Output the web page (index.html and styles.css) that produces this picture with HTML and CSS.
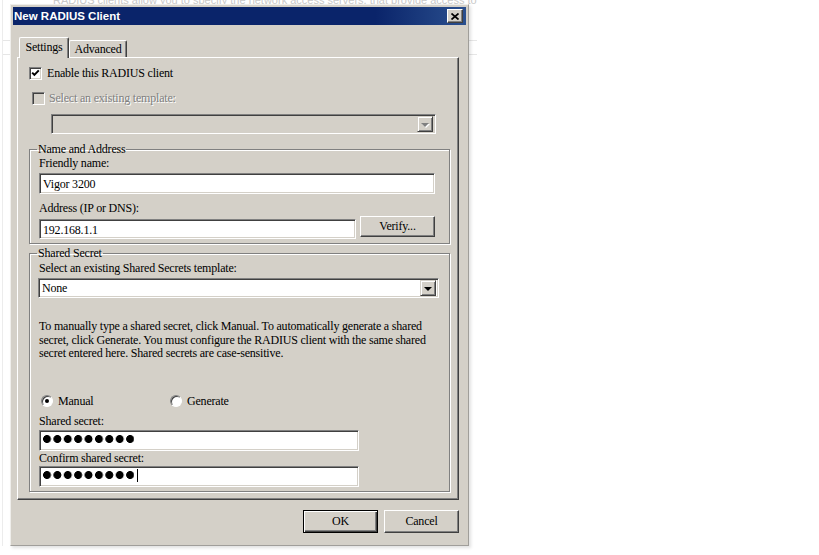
FILE: index.html
```html
<!DOCTYPE html>
<html lang="en">
   <head>
      <meta charset="UTF-8" />
      <title>New RADIUS Client</title>
      <link rel="stylesheet" href="styles.css">
   </head>
   <body>
      <!-- janela de fundo (console NPS) -->
      <div class="behind">
         <div class="behind-text">RADIUS clients allow you to specify the network access servers, that provide access to</div>
      </div>

      <div class="window">
         <div class="titlebar">
            <span class="title">New RADIUS Client</span>
            <span class="close-btn">
               <svg width="8" height="7" viewBox="0 0 8 7"><path d="M0.5 0.5 L7.5 6.5 M7.5 0.5 L0.5 6.5" stroke="#000" stroke-width="1.7" fill="none"/></svg>
            </span>
         </div>

         <div class="body">
            <div class="tabs">
               <div class="tab active">Settings</div>
               <div class="tab tab-adv">Advanced</div>
            </div>

            <div class="panel">
               <div class="row check-row">
                  <span class="checkbox">
                     <svg width="9" height="9" viewBox="0 0 9 9"><path d="M1.2 3.6 L3.4 5.9 L7.8 1.4" stroke="#000" stroke-width="2" fill="none"/></svg>
                  </span>
                  <span>Enable this RADIUS client</span>
               </div>

               <div class="row check-row disabled">
                  <span class="checkbox off"></span>
                  <span class="dis-text">Select an existing template:</span>
               </div>

               <div class="combo combo-disabled">
                  <span class="combo-value"></span>
                  <span class="arrow-btn"><span class="tri tri-dis"></span></span>
               </div>

               <fieldset class="group group-name">
                  <legend>Name and Address</legend>
                  <div class="label first">Friendly name:</div>
                  <div class="field field-wide">Vigor 3200</div>
                  <div class="label">Address (IP or DNS):</div>
                  <div class="addr-row">
                     <div class="field field-addr">192.168.1.1</div>
                     <div class="btn btn-verify">Verify...</div>
                  </div>
               </fieldset>

               <fieldset class="group group-secret">
                  <legend>Shared Secret</legend>
                  <div class="label first second-group">Select an existing Shared Secrets template:</div>
                  <div class="combo combo-secret">
                     <span class="combo-value">None</span>
                     <span class="arrow-btn"><span class="tri"></span></span>
                  </div>
                  <p class="help">
                     To manually type a shared secret, click Manual. To automatically generate a shared<br>
                     secret, click Generate. You must configure the RADIUS client with the same shared<br>
                     secret entered here. Shared secrets are case-sensitive.
                  </p>
                  <div class="radio-row">
                     <label class="radio-opt opt-manual"><span class="radio checked"></span>Manual</label>
                     <label class="radio-opt"><span class="radio"></span>Generate</label>
                  </div>
                  <div class="label label-secret">Shared secret:</div>
                  <div class="field field-secret first-secret"><span class="dots"></span></div>
                  <div class="label label-confirm">Confirm shared secret:</div>
                  <div class="field field-secret"><span class="dots"></span><span class="caret"></span></div>
               </fieldset>
            </div>

            <div class="buttons">
               <div class="btn btn-default">OK</div>
               <div class="btn">Cancel</div>
            </div>
         </div>
      </div>
   </body>
</html>
```

FILE: styles.css
```css
body {
margin: 0;
background: #fff;
font-family: "Liberation Serif", serif;
font-size: 12px;
letter-spacing: -0.2px;
color: #000;
position: relative;
height: 555px;
overflow: hidden;
}
/* janela atras do dialogo, desbotada */
.behind {
position: absolute;
left: 2px;
top: 0;
width: 474px;
height: 546px;
border-left: 1px solid #ececec;
overflow: hidden;
}
.behind::before {
content: "";
position: absolute;
left: 0;
right: 0;
top: 40px;
height: 13px;
border-top: 1px solid #e6e6e6;
border-bottom: 1px solid #e6e6e6;
}
.behind-text {
position: absolute;
left: 50px;
top: -6px;
font-family: "Liberation Sans", sans-serif;
font-size: 11px;
letter-spacing: 0;
color: #c9c9c9;
white-space: nowrap;
}
.window {
position: absolute;
left: 10px;
top: 4px;
width: 453px;
height: 536px;
padding: 2px;
border: 1px solid;
border-color: #efeeeb #a09e9a #a09e9a #efeeeb;
background: #d4d0c8;
box-shadow: 2px 2px 3px rgba(0, 0, 0, 0.12);
}
.titlebar {
height: 18px;
background: linear-gradient(to right, #0a246a 0%, #0a246a 80%, #2a4f8e 100%);
display: flex;
align-items: center;
justify-content: space-between;
padding: 0 3px 0 1px;
}
.title {
color: #fff;
font-family: "Liberation Sans", sans-serif;
font-weight: bold;
font-size: 11.5px;
letter-spacing: 0;
}
.close-btn {
width: 14px;
height: 12px;
background: #d4d0c8;
border: 1px solid;
border-color: #fff #404040 #404040 #fff;
box-shadow: inset -1px -1px #808080;
display: flex;
justify-content: center;
align-items: center;
}
.body {
padding: 12px 7px 0 4px;
}
.tabs {
display: flex;
align-items: flex-end;
height: 20px;
padding-left: 2px;
}
.tab {
position: relative;
box-sizing: border-box;
height: 17px;
line-height: 16px;
text-align: center;
border: 1px solid;
border-bottom: none;
border-color: #fff #404040 #fff #fff;
border-radius: 2px 2px 0 0;
box-shadow: inset -1px 0 #808080;
}
.tab.active {
z-index: 1;
width: 50px;
height: 21px;
line-height: 19px;
margin-bottom: -1px;
background: #d4d0c8;
}
.tab-adv {
width: 58px;
}
.panel {
height: 441px;
border: 1px solid;
border-color: #fff #404040 #404040 #fff;
box-shadow: inset -1px -1px #808080;
}
.row {
display: flex;
align-items: center;
height: 13px;
line-height: 13px;
}
.check-row {
margin-top: 9px;
padding-left: 11px;
gap: 5px;
}
.check-row.disabled {
margin-top: 12px;
padding-left: 14px;
gap: 4px;
}
.checkbox {
width: 11px;
height: 11px;
background: #fff;
border: 1px solid;
border-color: #808080 #fff #fff #808080;
box-shadow: inset 1px 1px #404040, inset -1px -1px #d4d0c8;
display: flex;
justify-content: center;
align-items: center;
}
.checkbox.off {
background: #d4d0c8;
}
.dis-text {
color: #808080;
text-shadow: 1px 1px #fff;
}
.combo {
display: flex;
justify-content: space-between;
align-items: center;
background: #fff;
border: 1px solid;
border-color: #808080 #fff #fff #808080;
box-shadow: inset 1px 1px #404040, inset -1px -1px #d4d0c8;
padding: 2px;
}
.combo-disabled {
margin: 9px 0 0 33px;
width: 379px;
height: 14px;
background: #d4d0c8;
}
.combo-value {
padding-left: 1px;
line-height: 14px;
}
.arrow-btn {
width: 14px;
height: 14px;
background: #d4d0c8;
border: 1px solid;
border-color: #d4d0c8 #404040 #404040 #d4d0c8;
box-shadow: inset 1px 1px #fff, inset -1px -1px #808080;
display: flex;
justify-content: center;
align-items: center;
}
.tri {
width: 0;
height: 0;
border-left: 4px solid transparent;
border-right: 4px solid transparent;
border-top: 4px solid #000;
margin-top: 1px;
}
.tri-dis {
border-top-color: #808080;
filter: drop-shadow(1px 1px 0 #fff);
}
.group {
margin: 9px 0 0 11px;
padding: 0 0 4px 9px;
border: 1px solid #808080;
box-shadow: inset 1px 1px #fff, 1px 1px #fff;
min-width: 0;
box-sizing: border-box;
width: 421px;
}
.group legend {
margin-left: -2px;
padding: 0 1px;
line-height: 13px;
}
.group-secret {
margin-top: 3px;
padding-bottom: 4px;
}
.label {
line-height: 13px;
height: 13px;
margin-top: 8px;
white-space: nowrap;
}
.label.first {
margin-top: 1px;
}
.label.second-group {
margin-top: 2px;
}
.field {
background: #fff;
border: 1px solid;
border-color: #808080 #fff #fff #808080;
box-shadow: inset 1px 1px #404040, inset -1px -1px #d4d0c8;
padding: 0 3px;
box-sizing: border-box;
height: 21px;
line-height: 21px;
white-space: nowrap;
}
.field-wide {
margin-top: 3px;
width: 396px;
}
.addr-row {
display: flex;
align-items: flex-start;
gap: 4px;
margin-top: 1px;
}
.field-addr {
margin-top: 3px;
width: 317px;
height: 20px;
line-height: 20px;
}
.btn {
width: 75px;
height: 23px;
box-sizing: border-box;
background: #d4d0c8;
border: 1px solid;
border-color: #fff #404040 #404040 #fff;
box-shadow: inset -1px -1px #808080;
text-align: center;
line-height: 21px;
}
.btn-verify {
height: 21px;
line-height: 19px;
}
.combo-secret {
margin: 3px 0 0 -1px;
width: 395px;
height: 14px;
}
.help {
margin: 22px 0 0 0;
line-height: 13.5px;
white-space: nowrap;
}
.radio-row {
display: flex;
align-items: center;
height: 13px;
line-height: 13px;
margin-top: 34px;
padding-left: 2px;
}
.radio-opt {
display: flex;
align-items: center;
gap: 5px;
}
.opt-manual {
width: 129px;
}
.radio {
width: 10px;
height: 10px;
border-radius: 50%;
background: #fff;
border: 1px solid;
border-color: #808080 #fff #fff #808080;
box-shadow: inset 1px 1px #404040, 0 0 0 0.5px #d4d0c8;
display: flex;
justify-content: center;
align-items: center;
}
.radio.checked::after {
content: "";
width: 4px;
height: 4px;
border-radius: 50%;
background: #000;
}
.label-secret {
margin-top: 7px;
}
.label-confirm {
margin-top: 1px;
}
.field-secret {
margin-top: 1px;
width: 320px;
display: flex;
align-items: center;
}
.first-secret {
margin-top: 2px;
}
.dots {
display: inline-block;
width: 91px;
height: 10px;
margin-top: -3px;
background: radial-gradient(circle at 4px 5px, #000 3.6px, transparent 4.3px) repeat-x;
background-size: 10.4px 10px;
}
.caret {
width: 1px;
height: 13px;
background: #000;
margin: -2px 0 0 3px;
}
.buttons {
display: flex;
justify-content: flex-end;
gap: 6px;
margin-top: 10px;
}
.btn-default {
border: 1px solid #000;
box-shadow: inset 1px 1px #fff, inset -1px -1px #404040, inset -2px -2px #808080;
}
```
